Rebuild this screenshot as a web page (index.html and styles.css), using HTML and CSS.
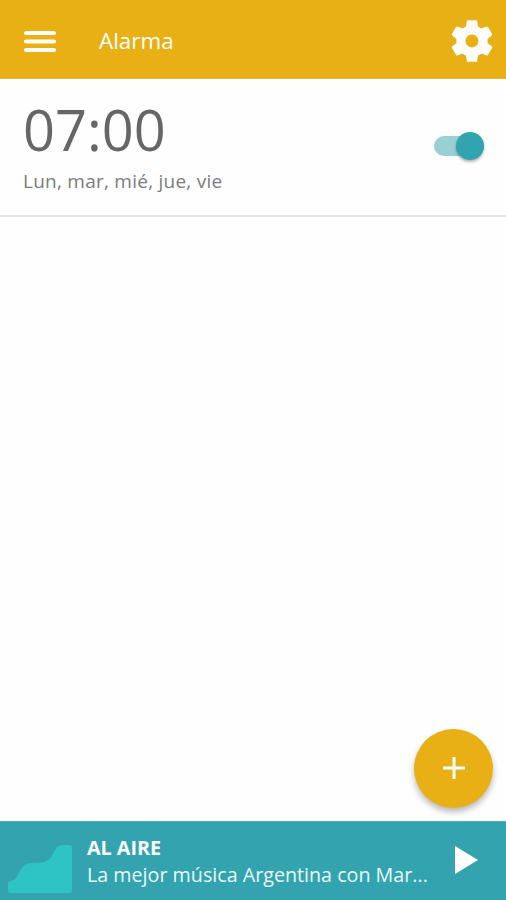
FILE: index.html
```html
<!DOCTYPE html>
<html lang="es">
<head>
  <meta charset="UTF-8">
  <title>Alarma</title>
  <link rel="stylesheet" href="styles.css">
</head>
<body>

  <header class="toolbar">
    <svg class="menu-icon" viewBox="0 0 32 24">
      <path d="M2 4H30M2 12.5H30M2 21H30" />
    </svg>
    <h1>Alarma</h1>
    <svg class="settings-icon" viewBox="0 0 24 24">
      <path d="M19.43 12.98c.04-.32.07-.64.07-.98s-.03-.66-.07-.98l2.11-1.65c.19-.15.24-.42.12-.64l-2-3.46c-.12-.22-.39-.3-.61-.22l-2.49 1c-.52-.4-1.08-.73-1.69-.98l-.38-2.65C14.46 2.18 14.25 2 14 2h-4c-.25 0-.46.18-.49.42l-.38 2.65c-.61.25-1.17.59-1.69.98l-2.49-1c-.23-.09-.49 0-.61.22l-2 3.46c-.13.22-.07.49.12.64l2.11 1.65c-.04.32-.07.65-.07.98s.03.66.07.98l-2.11 1.65c-.19.15-.24.42-.12.64l2 3.46c.12.22.39.3.61.22l2.49-1c.52.4 1.08.73 1.69.98l.38 2.65c.03.24.24.42.49.42h4c.25 0 .46-.18.49-.42l.38-2.65c.61-.25 1.17-.59 1.69-.98l2.49 1c.23.09.49 0 .61-.22l2-3.46c.12-.22.07-.49-.12-.64l-2.11-1.65zM12 15.1c-1.71 0-3.1-1.39-3.1-3.1s1.39-3.1 3.1-3.1 3.1 1.39 3.1 3.1-1.39 3.1-3.1 3.1z" />
    </svg>
  </header>

  <main class="alarms">
    <div class="alarm">
      <div>
        <div class="alarm-time">07:00</div>
        <div class="alarm-days">Lun, mar, mié, jue, vie</div>
      </div>
      <div class="switch"><span class="switch-thumb"></span></div>
    </div>
    <button class="add-btn" aria-label="Agregar alarma">
      <svg viewBox="0 0 24 24"><path d="M12 1V23M1 12H23" /></svg>
    </button>
  </main>

  <footer class="player">
    <svg class="player-logo" viewBox="0 0 64 48">
      <path d="M0 39Q0 36 3 36Q8 35 10 29Q15 19 22 18L32 18Q41 17 45 9Q48 0 55 0H61Q64 0 64 3V45Q64 48 61 48H3Q0 48 0 45Z" />
    </svg>
    <div class="player-text">
      <div class="player-title">AL AIRE</div>
      <div class="player-show">La mejor música Argentina con Mar...</div>
    </div>
    <svg class="play-icon" viewBox="0 0 23 28"><path d="M0 0L23 14L0 28Z" /></svg>
  </footer>

</body>
</html>
```
FILE: styles.css
```css
* {
  box-sizing: border-box;
}

body {
  margin: 0;
  height: 100vh;
  display: flex;
  flex-direction: column;
  font-family: 'Open Sans', sans-serif;
  background: #fefefe;
  overflow: hidden;
}

.toolbar {
  height: 79px;
  display: flex;
  align-items: center;
  padding: 3px 9px 0 24px;
  background: #e8b014;
  color: #fff;
  border-bottom: 1px solid #e6b743;
}

.menu-icon {
  width: 32px;
  height: 24px;
  fill: none;
  stroke: #fff;
  stroke-width: 4;
  stroke-linecap: round;
}

.toolbar h1 {
  flex: 1;
  margin: 0 0 0 43px;
  font-size: 22.4px;
  font-weight: 400;
  line-height: 30px;
}

.settings-icon {
  width: 50px;
  height: 50px;
  fill: #fff;
}

.alarms {
  flex: 1;
  display: flex;
  flex-direction: column;
}

.alarm {
  height: 138px;
  display: flex;
  justify-content: space-between;
  padding: 18px 22px 0 23px;
  border-bottom: 2px solid #e5e5e5;
}

.alarm-time {
  font-size: 56px;
  line-height: 64px;
  color: #666;
}

.alarm-days {
  margin-top: 7px;
  font-size: 19px;
  letter-spacing: 0.25px;
  line-height: 26px;
  color: #7c7c7c;
}

.switch {
  width: 50px;
  height: 20px;
  margin-top: 39px;
  display: flex;
  align-items: center;
  justify-content: flex-end;
  border-radius: 10px;
  background: #98d0d4;
}

.switch-thumb {
  width: 28px;
  height: 28px;
  border-radius: 50%;
  background: #32a4af;
  box-shadow: 0 2px 3px rgba(0,0,0,0.3);
}

.add-btn {
  width: 79px;
  height: 79px;
  margin: auto 13px 13px auto;
  padding: 0;
  display: flex;
  align-items: center;
  justify-content: center;
  border: none;
  border-radius: 50%;
  background: #e8b014;
  box-shadow: 0 4px 6px rgba(0,0,0,0.28);
}

.add-btn svg {
  width: 24px;
  height: 24px;
  margin: 0 0 1px 0;
  fill: none;
  stroke: #fff;
  stroke-width: 3;
}

.player {
  height: 79px;
  display: flex;
  padding: 0 28px 0 8px;
  background: #33a4af;
  border-top: 1px solid #5bb0b8;
  color: #fff;
}

.player-logo {
  width: 64px;
  height: 48px;
  margin-top: 23px;
  fill: #2ec4c6;
}

.player-text {
  flex: 1;
  margin: 12px 0 0 15px;
  white-space: nowrap;
}

.player-title {
  font-size: 19.7px;
  font-weight: 700;
  line-height: 27px;
}

.player-show {
  font-size: 19.7px;
  line-height: 27px;
  color: #e9f8f9;
}

.play-icon {
  width: 23px;
  height: 28px;
  margin-top: 24px;
  fill: #fff;
}
```
